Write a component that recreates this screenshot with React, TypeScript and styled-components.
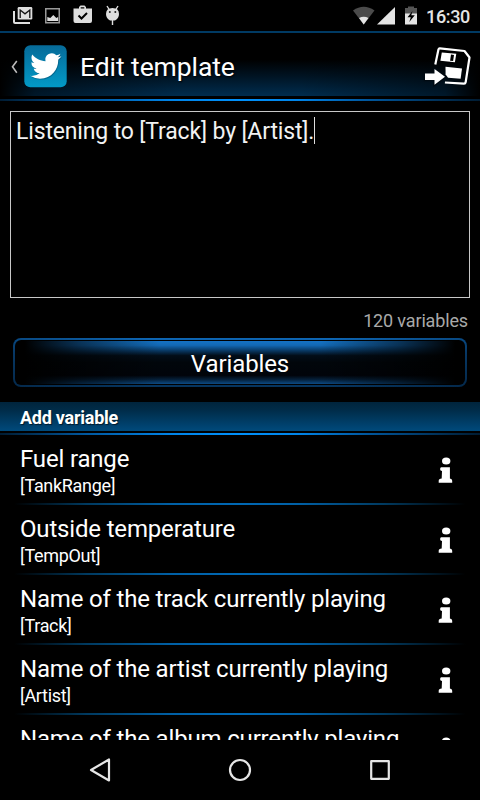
import React from 'react';
import styled, { createGlobalStyle } from 'styled-components';

const GlobalStyle = createGlobalStyle`
  * { box-sizing: border-box; }
  body { margin: 0; background: #000; }
`;

const Screen = styled.div`
  width: 480px;
  height: 800px;
  display: flex;
  flex-direction: column;
  overflow: hidden;
  background: #000;
  color: #fff;
  font-family: Roboto, sans-serif;
`;

const StatusBar = styled.div`
  height: 31px;
  flex: none;
  display: flex;
  justify-content: space-between;
`;

const StatusIcons = styled.svg<{ $w: number }>`
  display: block;
  width: ${(p) => p.$w}px;
  height: 31px;
`;

const StatusRight = styled.div`
  display: flex;
  padding-right: 10px;
`;

const Clock = styled.span`
  width: 45px;
  padding-left: 1px;
  font-size: 18px;
  font-weight: 500;
  letter-spacing: -0.35px;
  line-height: 33px;
  color: #e4e4e4;
  white-space: nowrap;
`;

const Header = styled.header`
  height: 68px;
  flex: none;
  display: flex;
  align-items: flex-start;
  border-top: 2px solid #003a63;
  border-bottom: 3px solid #000;
  background:
    linear-gradient(90deg, #000 0, rgba(0, 0, 0, 0.45) 35px, transparent 180px, transparent 300px, rgba(0, 0, 0, 0.45) 445px, #000 100%),
    linear-gradient(180deg, #000 0, #000 42%, #001322 68%, #002d4f 100%);
`;

const BackArrow = styled.svg`
  width: 24px;
  height: 63px;
  flex: none;
`;

const AppIcon = styled.svg`
  width: 43px;
  height: 43px;
  margin-top: 12px;
  flex: none;
`;

const Title = styled.h1`
  margin: 0 0 0 13px;
  flex: 1;
  font-size: 26.5px;
  font-weight: 400;
  letter-spacing: -0.08px;
  line-height: 67px;
  white-space: nowrap;
  text-shadow: 1px 1px 2px #000;
`;

const SaveIcon = styled.svg`
  width: 50px;
  height: 44px;
  margin: 11px 7px 0 0;
  flex: none;
`;

const GlowLine = styled.div<{ $tone?: 'bright' | 'row' }>`
  height: 2px;
  flex: none;
  background: ${(p) =>
    p.$tone === 'row'
      ? 'linear-gradient(90deg, #000 3%, #003a60 18%, #0060a6 36%, #0068b4 50%, #0060a6 62%, #003a60 80%, #000 97%)'
      : 'linear-gradient(90deg, #001c33 0, #0058a0 18%, #0084e8 36%, #0090fa 50%, #0084e8 62%, #0058a0 76%, #001c33 100%)'};
`;

const Editor = styled.div`
  height: 187px;
  flex: none;
  margin: 10px 10px 1px;
  padding: 5px;
  border: 1px solid #c8c8c8;
  font-size: 23px;
  letter-spacing: -0.15px;
  line-height: 29px;
  color: #f2f2f2;
  display: flex;
  align-items: flex-start;
  white-space: nowrap;
`;

const Caret = styled.span`
  width: 1px;
  height: 27px;
  background: #ddd;
`;

const Counter = styled.div`
  flex: none;
  height: 39px;
  padding: 11px 12px 0 0;
  text-align: right;
  font-size: 18px;
  letter-spacing: -0.15px;
  line-height: 22px;
  color: #a9a9a9;
`;

const VariablesButton = styled.button`
  flex: none;
  height: 49px;
  margin: 0 13px 15px;
  padding: 1px;
  border-radius: 8px;
  border: 2px solid transparent;
  background:
    linear-gradient(#000, #000) padding-box,
    linear-gradient(90deg, rgba(0, 20, 40, 0.35) 0, transparent 30%, transparent 70%, rgba(0, 20, 40, 0.35) 100%) border-box,
    linear-gradient(180deg, #0d66b4 0, #0a4a84 30%, #06345e 100%) border-box;
  font-family: Roboto, sans-serif;
  font-size: 24px;
  letter-spacing: -0.1px;
  color: #fff;
`;

const ButtonFace = styled.span`
  height: 43px;
  display: flex;
  align-items: center;
  justify-content: center;
  padding-top: 2px;
  border-radius: 5px;
  background:
    linear-gradient(90deg, #000 2%, rgba(0, 0, 0, 0.55) 14%, transparent 32%, transparent 68%, rgba(0, 0, 0, 0.55) 86%, #000 98%),
    linear-gradient(180deg, #1572c4 0, #1268b4 10%, #093a66 22%, #020d18 34%, #01060b 50%, #01040a 80%, #05213c 90%, #0c4a84 100%);
`;

const SectionHeader = styled.h2`
  margin: 0 0 2px;
  height: 29px;
  flex: none;
  padding-left: 20px;
  background: linear-gradient(180deg, #00243c 0, #002b47 25%, #004a7c 100%);
  font-size: 18px;
  font-weight: 700;
  letter-spacing: -0.25px;
  line-height: 32px;
  text-shadow: 1px 1px 1px #001a2c;
`;

const List = styled.div`
  flex: 1;
  min-height: 0;
  overflow: hidden;
`;

const Row = styled.div`
  height: 68px;
  display: flex;
  justify-content: space-between;
  padding: 10px 25px 0 20px;
`;

const RowText = styled.div`
  display: flex;
  flex-direction: column;
  gap: 2px;
  white-space: nowrap;
`;

const RowName = styled.span`
  font-size: 24px;
  letter-spacing: -0.17px;
  line-height: 28px;
`;

const RowKey = styled.span`
  font-size: 18px;
  letter-spacing: -0.32px;
  line-height: 22px;
`;

const InfoIcon = styled.svg`
  width: 18px;
  height: 30px;
  margin-top: 10px;
`;

const NavBar = styled.nav`
  height: 60px;
  flex: none;
  display: flex;
  justify-content: center;
  gap: 80px;
  background: #000;
`;

const NavIcon = styled.svg`
  width: 60px;
  height: 60px;
  fill: none;
  stroke: #e6e6e6;
  stroke-width: 2.2;
  stroke-linejoin: round;
`;

const variables = [
  { name: 'Fuel range', key: '[TankRange]' },
  { name: 'Outside temperature', key: '[TempOut]' },
  { name: 'Name of the track currently playing', key: '[Track]' },
  { name: 'Name of the artist currently playing', key: '[Artist]' },
  { name: 'Name of the album currently playing', key: '' },
];

function Notifications() {
  return (
    <StatusIcons $w={130} viewBox="0 0 130 31" fill="#dedede">
      {/* mail */}
      <path d="M13 11h2v11h15v2H15q-2 0-2-2z" />
      <path d="M19 7h12q1.300 0 1.300 1.300v9.900q0 1.300-1.300 1.300H19q-1.300 0-1.300-1.300V8.300Q17.700 7 19 7z" />
      <path d="M20.200 18V10l4.800 3.800L29.800 10v8" fill="none" stroke="#111" strokeWidth="1.300" />
      {/* picture */}
      <path fillRule="evenodd" fill="#999" d="M45 8h15v15.500H45zM46.500 9.500V22h12V9.500z" />
      <path d="M47.300 17l3 1 3-3 3 3 1.800-1v4H47.300z" />
      {/* store bag */}
      <path fillRule="evenodd" d="M79 8.500V7l1.500-1.500h4L86 7v1.500h6V21q0 2-2 2H75.500q-2 0-2-2V8.500zM80.700 8.500h3.600V7.200h-3.600z" />
      <path d="M78.500 15.500l3 3 5.500-5.500" fill="none" stroke="#000" strokeWidth="2" />
      {/* robot */}
      <path d="M107 6l2.500 4M118 6l-2.500 4M112.500 19v6" stroke="#dedede" strokeWidth="1.400" />
      <path d="M106 14q0-6 6.500-6t6.500 6q0 4-4 6.500h-5q-4-2.500-4-6.500z" />
      <circle cx="109.800" cy="12" r="1" fill="#222" />
      <circle cx="115.300" cy="12" r="1" fill="#222" />
    </StatusIcons>
  );
}

function SystemIcons() {
  return (
    <StatusIcons $w={72} viewBox="353 0 72 31" fill="#e4e4e4">
      <path fill="#4b4b4b" d="M353 10.500Q363.700 3 374.500 10.500L363.700 24.500z" />
      <path d="M359 18q4.700-2.700 9.500 0l-4.800 6.500z" />
      <path d="M395 7v17.500h-18z" />
      <path fill="#555" d="M405 8h3V6.500h6V8h3v6h-12z" />
      <path d="M405 13.500h12V24.500h-12z" />
      <path fill="#000" d="M412.500 11l-5 6.200h3.300l-1.500 4.800 5.500-6.800h-3.500z" />
    </StatusIcons>
  );
}

const birdPath =
  'M23.950 4.570a10 10 0 0 1-2.820.780 4.960 4.960 0 0 0 2.160-2.720c-.95.550-2 .95-3.130 1.180a4.920 4.920 0 0 0-8.380 4.480C7.690 8.100 4.070 6.130 1.640 3.160a4.820 4.820 0 0 0-.67 2.480c0 1.710.87 3.210 2.190 4.100a4.900 4.900 0 0 1-2.230-.62v.06a4.920 4.920 0 0 0 3.950 4.830 5 5 0 0 1-2.210.08 4.940 4.940 0 0 0 4.600 3.420A9.870 9.870 0 0 1 0 19.540a14 14 0 0 0 7.550 2.210c9.050 0 14-7.500 14-13.980 0-.21 0-.42-.02-.63a9.940 9.940 0 0 0 2.460-2.550z';

function TwitterIcon() {
  return (
    <AppIcon viewBox="0 0 43 43">
      <defs>
        <linearGradient id="tile" x1="0" y1="0" x2="0" y2="1">
          <stop offset="0" stopColor="#066a98" />
          <stop offset="1" stopColor="#029ac7" />
        </linearGradient>
      </defs>
      <rect x="0.300" y="0.300" width="42.400" height="42" rx="6" fill="url(#tile)" />
      <g transform="translate(6.200 5.400) scale(1.300)">
        <path fill="#034e70" opacity="0.550" transform="translate(.5 .7)" d={birdPath} />
        <path fill="#fff" d={birdPath} />
      </g>
    </AppIcon>
  );
}

export default function App() {
  return (
    <>
      <GlobalStyle />
      <Screen>
        <StatusBar>
          <Notifications />
          <StatusRight>
            <SystemIcons />
            <Clock>16:30</Clock>
          </StatusRight>
        </StatusBar>
        <Header>
          <BackArrow viewBox="0 0 24 63">
            <path d="M16.800 28l-4.300 5.700 4.300 6" fill="none" stroke="#bbb" strokeWidth="1.600" />
          </BackArrow>
          <TwitterIcon />
          <Title>Edit template</Title>
          <SaveIcon viewBox="423 44 50 44">
            <path
              d="M435.300 64.500L438.500 49.200q.3-1 1.300-.9L464.500 51l5 6.500-3.800 24.500q-.3 1.800-1.800 1.700l-19-1.200"
              fill="none"
              stroke="#fff"
              strokeWidth="2.200"
              strokeLinejoin="round"
            />
            <path fill="#fff" fillRule="evenodd" d="M441.800 52.500l14.500 1.200-1.400 8.500-14.500-1.500zM451 54.600l-.9 6.200 3 .3.900-6.200z" />
            <path fill="#fff" d="M445.500 66.800l16.500 1.600-1.400 10.300-12.500-1-2.500-3.200z" />
            <path fill="#fff" stroke="#000a12" strokeWidth="2.500" paintOrder="stroke" d="M425 73.500h9.500V69l10.500 7.800-10.500 8V80H425z" />
          </SaveIcon>
        </Header>
        <GlowLine />
        <Editor>
          Listening to [Track] by [Artist].
          <Caret />
        </Editor>
        <Counter>120 variables</Counter>
        <VariablesButton>
          <ButtonFace>Variables</ButtonFace>
        </VariablesButton>
        <SectionHeader>Add variable</SectionHeader>
        <GlowLine />
        <List>
          {variables.map((v) => (
            <React.Fragment key={v.name}>
              <Row>
                <RowText>
                  <RowName>{v.name}</RowName>
                  {v.key && <RowKey>{v.key}</RowKey>}
                </RowText>
                <InfoIcon viewBox="0 0 18 30" fill="#fff">
                  <ellipse cx="9.200" cy="6" rx="4.200" ry="3.600" />
                  <path d="M4.300 12.300h8.600V23.600q2.300.3 2.300 2.200v1.900H1.700v-1.900q0-1.900 3-2.200l.3-7.600q-1.900-.3-1.900-1.800 0-1.900 1.200-1.900z" />
                </InfoIcon>
              </Row>
              <GlowLine $tone="row" />
            </React.Fragment>
          ))}
        </List>
        <NavBar>
          <NavIcon viewBox="0 0 60 60">
            <path d="M39 19.500v21L21 30z" />
          </NavIcon>
          <NavIcon viewBox="0 0 60 60">
            <circle cx="30" cy="30" r="10" />
          </NavIcon>
          <NavIcon viewBox="0 0 60 60">
            <rect x="21.200" y="21.200" width="17.600" height="17.600" />
          </NavIcon>
        </NavBar>
      </Screen>
    </>
  );
}
